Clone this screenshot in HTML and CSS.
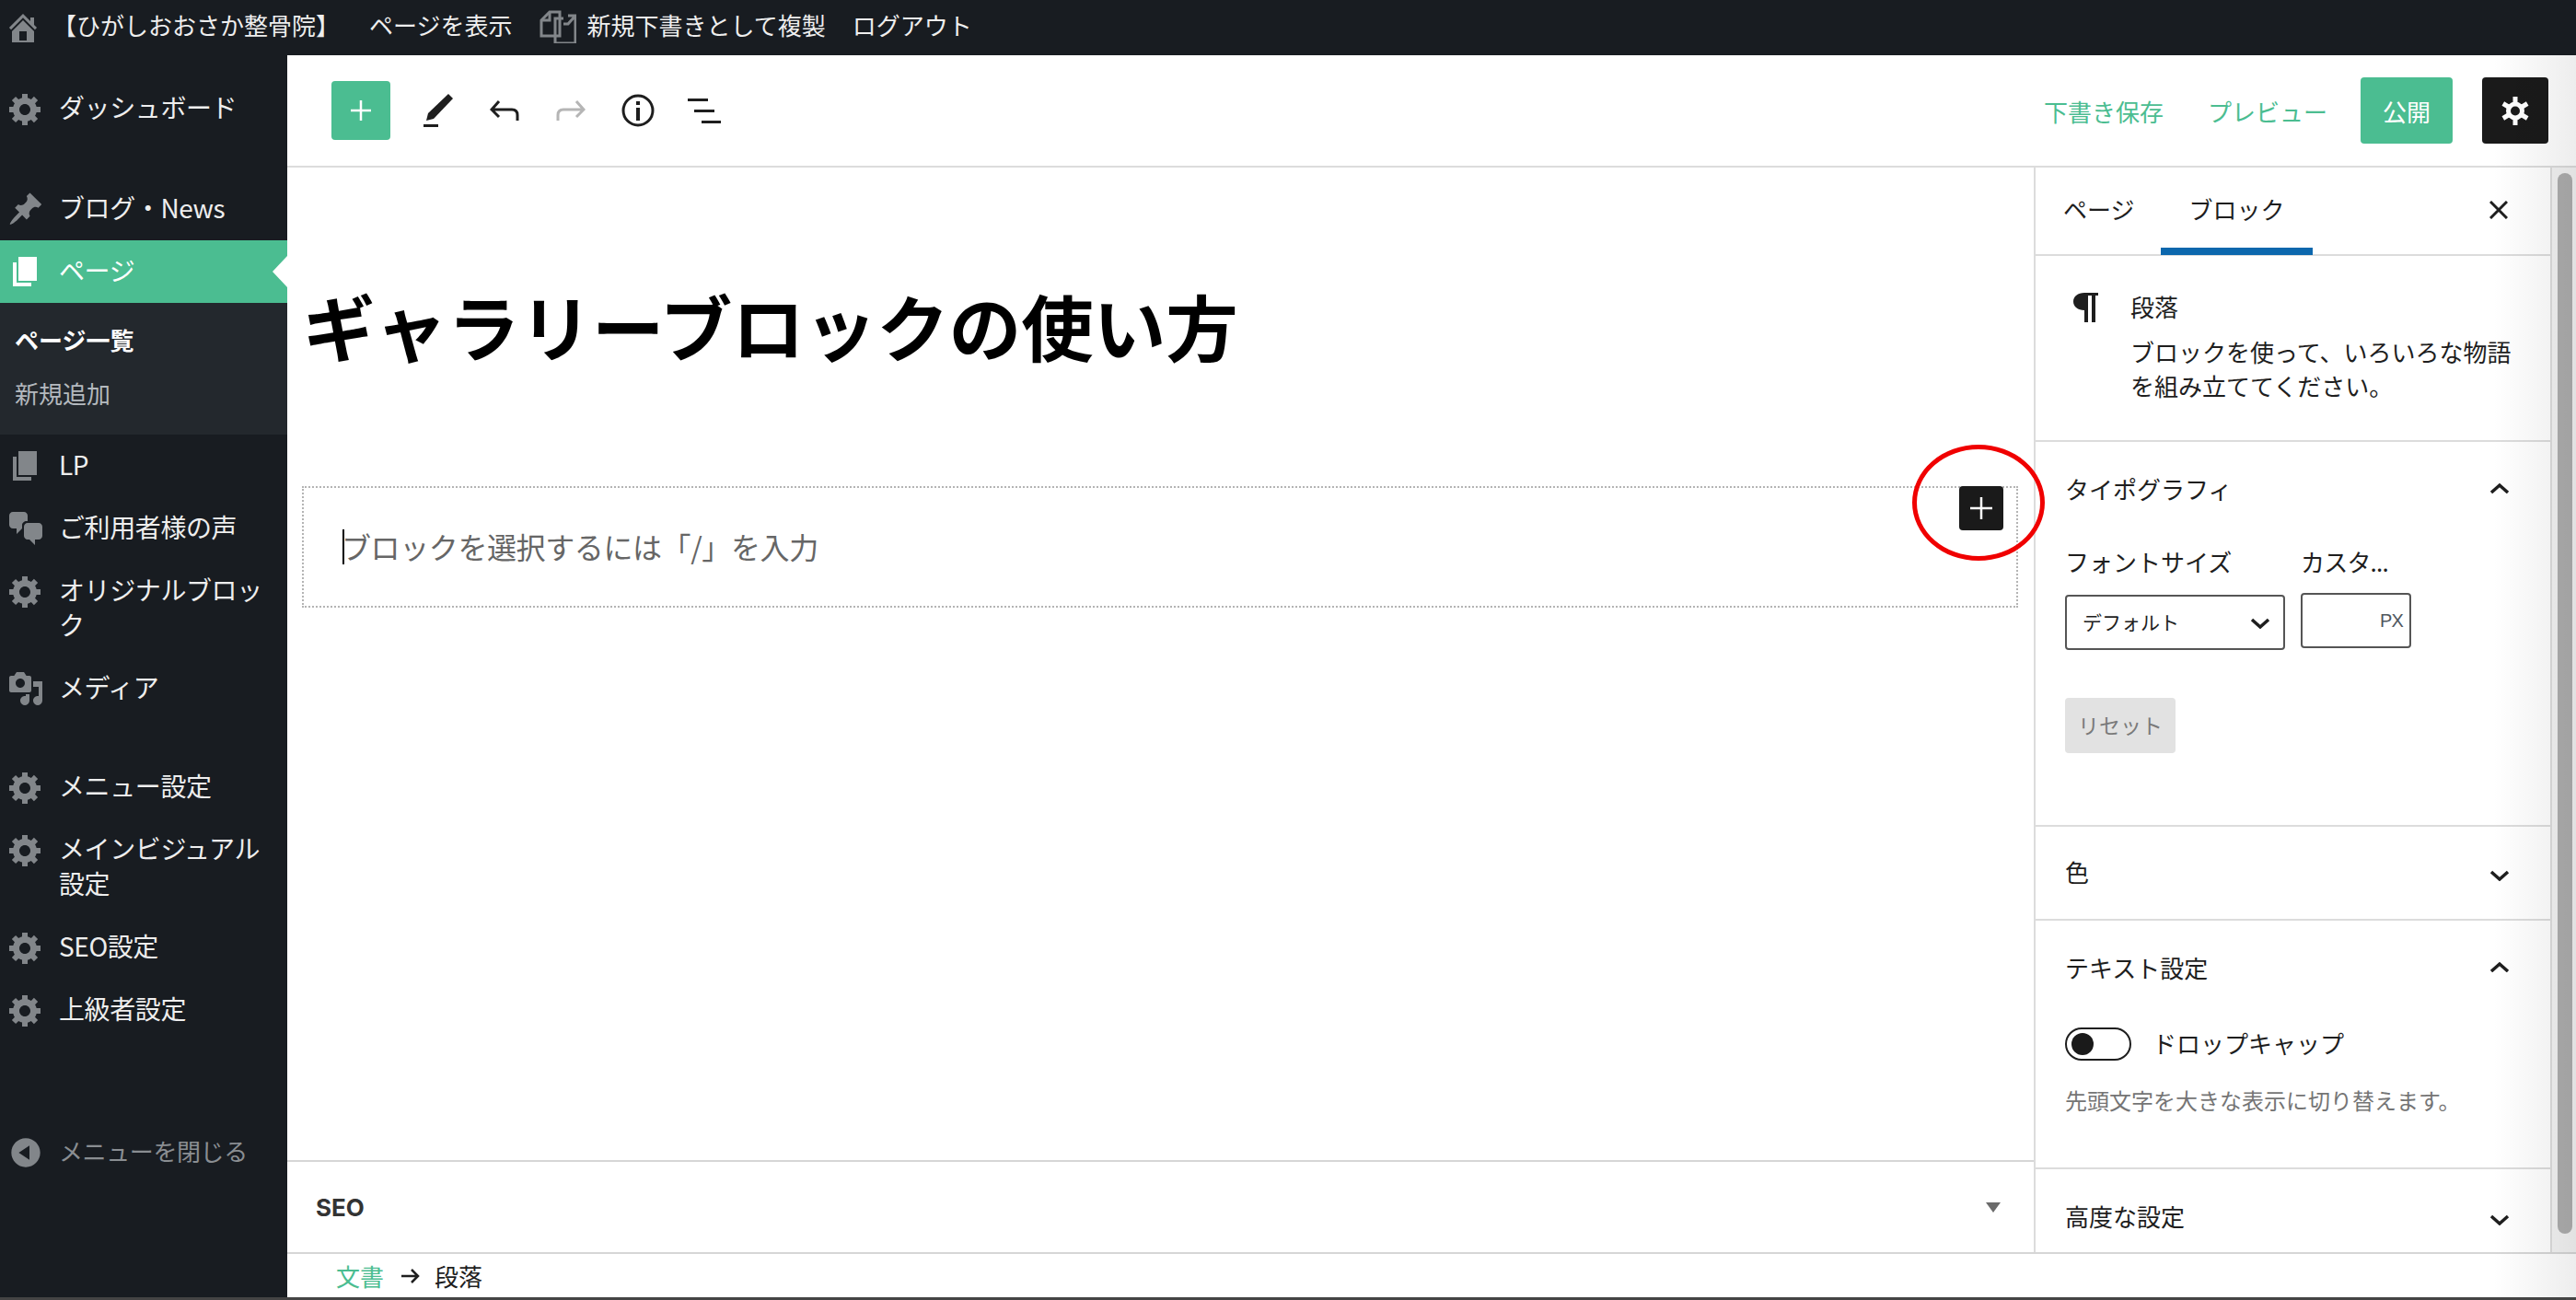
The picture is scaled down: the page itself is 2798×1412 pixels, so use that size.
FILE: index.html
```html
<!DOCTYPE html>
<html lang="ja">
<head>
  <meta charset="UTF-8" />
  <title>ギャラリーブロックの使い方</title>
  <link rel="stylesheet" href="styles.css">
</head>
<body>
  <!-- Shared icons -->
  <svg class="icon-defs">
    <symbol id="icon-gear" viewBox="0 0 20 20"><path d="M18 12h-2.18c-.17.7-.44 1.35-.81 1.93l1.54 1.54-2.1 2.1-1.54-1.54c-.58.36-1.23.63-1.91.79V19H8v-2.19c-.68-.16-1.33-.43-1.91-.79l-1.54 1.54-2.12-2.12 1.54-1.54c-.36-.58-.63-1.23-.79-1.91H1V9.03h2.17c.16-.7.44-1.35.8-1.94L2.43 5.55l2.1-2.1 1.54 1.54c.58-.37 1.24-.64 1.93-.81V2h3v2.18c.68.16 1.33.43 1.91.79l1.54-1.54 2.12 2.12-1.54 1.54c.36.59.64 1.24.8 1.94H18V12zm-8.5 1.5c1.66 0 3-1.34 3-3s-1.34-3-3-3-3 1.34-3 3 1.34 3 3 3z"/></symbol>
    <symbol id="icon-page" viewBox="0 0 20 20"><path d="M6 15V2h10v13H6zm-1 1h8v2H3V5h2v11z"/></symbol>
    <symbol id="icon-down" viewBox="0 0 22 12"><path d="M2 2l9 8 9-8"/></symbol>
    <symbol id="icon-up" viewBox="0 0 22 12"><path d="M2 11l9-8 9 8"/></symbol>
  </svg>

  <!-- Admin bar -->
  <header class="adminbar">
    <svg class="adminbar-home" viewBox="0 0 20 20"><path d="M16 8.5l1.53 1.53-1.06 1.06L10 4.62l-6.47 6.47-1.06-1.06L10 2.5l4 4v-2h2v4zm-6-2.46l6 5.99V18H4v-5.97zM12 17v-5H8v5h4z"/></svg>
    <a class="adminbar-site">【ひがしおおさか整骨院】</a>
    <a class="adminbar-view">ページを表示</a>
    <svg class="adminbar-copy" viewBox="0 0 40 40" fill="none"><path d="M2 15 11 6h11v26H2z"/><path d="M11 6v9H2"/><path d="M17 40V13h9M31 10h8v30H17M39 10l-8 9h-5"/></svg>
    <a class="adminbar-duplicate">新規下書きとして複製</a>
    <a class="adminbar-logout">ログアウト</a>
  </header>

  <div class="layout">
    <!-- Side menu -->
    <nav class="sidemenu">
      <a class="menu-item"><svg><use href="#icon-gear"/></svg><span>ダッシュボード</span></a>
      <a class="menu-item group-start"><svg viewBox="0 0 20 20"><path d="M10.44 3.02l1.82-1.82 6.36 6.35-1.83 1.82c-1.05-.68-2.48-.57-3.41.36l-.75.75c-.92.93-1.04 2.35-.35 3.41l-1.83 1.82-2.41-2.41-2.8 2.79c-.42.42-3.38 2.71-3.8 2.29s1.86-3.39 2.28-3.81l2.79-2.79L4.1 9.36l1.83-1.82c1.05.69 2.48.57 3.41-.36l.75-.75c.93-.92 1.05-2.35.35-3.41z"/></svg><span>ブログ・News</span></a>
      <a class="menu-item active"><svg><use href="#icon-page"/></svg><span>ページ</span></a>
      <div class="submenu">
        <a class="submenu-current">ページ一覧</a>
        <a>新規追加</a>
      </div>
      <a class="menu-item"><svg><use href="#icon-page"/></svg><span>LP</span></a>
      <a class="menu-item"><svg viewBox="0 0 20 20"><path d="M11 6h-.82C9.07 6 8 7.2 8 8.16V10l-3 3v-3H3c-1.1 0-2-.9-2-2V3c0-1.1.9-2 2-2h6c1.1 0 2 .9 2 2v3zm0 1h6c1.1 0 2 .9 2 2v5c0 1.1-.9 2-2 2h-2v3l-3-3h-1c-1.1 0-2-.9-2-2V9c0-1.1.9-2 2-2z"/></svg><span>ご利用者様の声</span></a>
      <a class="menu-item"><svg><use href="#icon-gear"/></svg><span>オリジナルブロック</span></a>
      <a class="menu-item"><svg viewBox="0 0 20 20"><path d="M13 11V4c0-.55-.45-1-1-1h-1.67L9 1H5L3.67 3H2c-.55 0-1 .45-1 1v7c0 .55.45 1 1 1h10c.55 0 1-.45 1-1zM7 4.5c1.38 0 2.5 1.12 2.5 2.5S8.38 9.5 7 9.5 4.5 8.38 4.5 7 5.62 4.5 7 4.5zM14 6h5v10.5c0 1.38-1.12 2.5-2.5 2.5S14 17.88 14 16.5s1.12-2.5 2.5-2.5c.17 0 .34.02.5.05V9h-3V6zm-4 8.05V13h2v3.5c0 1.38-1.12 2.5-2.5 2.5S7 17.88 7 16.5 8.12 14 9.5 14c.17 0 .34.02.5.05z"/></svg><span>メディア</span></a>
      <a class="menu-item group-settings"><svg><use href="#icon-gear"/></svg><span>メニュー設定</span></a>
      <a class="menu-item"><svg><use href="#icon-gear"/></svg><span>メインビジュアル設定</span></a>
      <a class="menu-item"><svg><use href="#icon-gear"/></svg><span>SEO設定</span></a>
      <a class="menu-item"><svg><use href="#icon-gear"/></svg><span>上級者設定</span></a>
      <a class="menu-item menu-collapse"><svg viewBox="0 0 20 20"><path d="M10 2.16c4.33 0 7.84 3.51 7.84 7.84s-3.51 7.84-7.84 7.84S2.16 14.33 2.16 10 5.71 2.16 10 2.16zm2 11.72V6.12L6.18 9.97z"/></svg><span>メニューを閉じる</span></a>
    </nav>

    <div class="content">
      <!-- Editor toolbar -->
      <div class="toolbar">
        <button class="inserter"><svg viewBox="0 0 24 24"><path d="M12 1v22M1 12h22"/></svg></button>
        <svg class="tool tool-pencil" viewBox="0 0 32 37"><path class="solid" d="M27 0l5 5L11 27l-8 2 2-8z"/><path class="solid" d="M0 33h16v3H0z"/></svg>
        <svg class="tool tool-undo" viewBox="0 0 32 22"><path d="M10 1 2 10l8 8M2 10h22q6 0 6 6v6"/></svg>
        <svg class="tool tool-redo" viewBox="0 0 32 22"><path d="M22 1l8 9-8 8M30 10H8q-6 0-6 6v6"/></svg>
        <svg class="tool tool-info" viewBox="0 0 36 36"><circle cx="18" cy="18" r="16"/><path class="solid" d="M16 8h4v4h-4zM16 15h4v14h-4z"/></svg>
        <svg class="tool tool-list" viewBox="0 0 36 27"><path class="solid" d="M0 0h22v3H0zM7 12h22v3H7zM15 24h21v3H15z"/></svg>
        <div class="toolbar-right">
          <a class="link-green link-save">下書き保存</a>
          <a class="link-green link-preview">プレビュー</a>
          <button class="publish">公開</button>
          <button class="settings">
            <svg viewBox="0 0 30 33"><circle cx="15" cy="16.500" r="7.500"/><path d="M15 1v31M1.800 8.500l26.400 16M1.800 24.500l26.400-16"/><circle class="cog-hole" cx="15" cy="16.500" r="5"/></svg>
          </button>
        </div>
      </div>

      <div class="workspace">
        <main class="editor">
          <div class="canvas">
            <h1 class="post-title">ギャラリーブロックの使い方</h1>
            <div class="block">
              <span class="caret"></span><span class="placeholder">ブロックを選択するには「/」を入力</span>
              <button class="block-add"><svg viewBox="0 0 24 24"><path d="M12 0v24M0 12h24"/></svg></button>
              <span class="red-circle"></span>
            </div>
          </div>
          <div class="metabox">
            <strong>SEO</strong>
            <span class="metabox-arrow"></span>
          </div>
        </main>

        <!-- Settings sidebar -->
        <aside class="panel">
          <div class="tabs">
            <span class="tab">ページ</span>
            <span class="tab tab-active">ブロック</span>
            <svg class="tabs-close" viewBox="0 0 20 20"><path d="M1 1l18 18M19 1 1 19"/></svg>
          </div>
          <div class="block-card">
            <span class="pilcrow"><svg viewBox="0 0 27 32"><path d="M12 0h15v3h-3v29h-4V3h-4v29h-4V19C5 19 0 15 0 9.500S5 0 12 0z"/></svg></span>
            <div>
              <div class="block-name">段落</div>
              <p class="block-desc">ブロックを使って、いろいろな物語を組み立ててください。</p>
            </div>
          </div>

          <section class="section section-typo">
            <div class="section-head"><span>タイポグラフィ</span><svg class="chevron chevron-up"><use href="#icon-up"/></svg></div>
            <div class="typo-fields">
              <div class="field-size">
                <label>フォントサイズ</label>
                <div class="select">デフォルト<svg class="chevron chevron-down"><use href="#icon-down"/></svg></div>
              </div>
              <div class="field-custom">
                <label>カスタ...</label>
                <div class="unit-input">PX</div>
              </div>
            </div>
            <button class="reset">リセット</button>
          </section>

          <section class="section">
            <div class="section-head section-head-small"><span>色</span><svg class="chevron chevron-down"><use href="#icon-down"/></svg></div>
          </section>

          <section class="section section-text">
            <div class="section-head"><span>テキスト設定</span><svg class="chevron chevron-up"><use href="#icon-up"/></svg></div>
            <div class="toggle-row"><span class="toggle"><i></i></span><span class="toggle-label">ドロップキャップ</span></div>
            <p class="help">先頭文字を大きな表示に切り替えます。</p>
          </section>

          <section class="section section-last">
            <div class="section-head"><span>高度な設定</span><svg class="chevron chevron-down"><use href="#icon-down"/></svg></div>
          </section>
        </aside>

        <div class="scrolltrack"><div class="scrollthumb"></div></div>
      </div>

      <div class="breadcrumb">
        <a class="link-green">文書</a>
        <svg viewBox="0 0 20 16"><path d="M0 8h18M11 1l7 7-7 7"/></svg>
        <span>段落</span>
      </div>
    </div>
  </div>
  <div class="bottom-line"></div>
  <div class="edge-fade"></div>
</body>
</html>
```

FILE: styles.css
```css
* {
  box-sizing: border-box;
}

html, body {
  margin: 0;
  height: 1412px;
  overflow: hidden;
}

body {
  position: relative;
  display: flex;
  flex-direction: column;
  font-family: "Noto Sans CJK JP", "Noto Sans", sans-serif;
  font-size: 26px;
  color: #1e1e1e;
  background: #fff;
}

button {
  border: none;
  padding: 0;
  font: inherit;
}

p {
  margin: 0;
}

.icon-defs {
  display: none;
}

/* Admin bar */
.adminbar {
  flex: none;
  display: flex;
  align-items: center;
  height: 60px;
  padding: 0 0 6px 5px;
  background: #181c21;
  color: #eeeeee;
  line-height: 1;
}

.adminbar-home {
  width: 40px;
  height: 40px;
  margin-top: 6px;
  fill: #82868a;
}

.adminbar-site {
  margin-left: 12px;
}

.adminbar-view {
  margin-left: 32px;
}

.adminbar-copy {
  width: 40px;
  height: 40px;
  margin-left: 29px;
  stroke: #82868a;
  stroke-width: 3;
}

.adminbar-duplicate {
  margin-left: 12px;
}

.adminbar-logout {
  margin-left: 29px;
}

.layout {
  flex: 1;
  display: flex;
  min-height: 0;
}

/* Side menu */
.sidemenu {
  flex: none;
  width: 312px;
  padding-top: 24px;
  background: #181c21;
  color: #eeeeee;
  font-size: 28px;
  line-height: 38px;
}

.menu-item {
  display: flex;
  align-items: flex-start;
  padding: 13px 10px 17px 64px;
  position: relative;
  letter-spacing: -0.4px;
}

.menu-item svg {
  position: absolute;
  left: 8px;
  top: 14px;
  width: 40px;
  height: 40px;
  fill: #82868a;
}

.group-start {
  margin-top: 41px;
}

.group-settings {
  margin-top: 39px;
}

.active {
  background: #4bbd91;
  color: #fff;
}

.active svg {
  fill: #fff;
}

.active::after {
  content: "";
  position: absolute;
  right: 0;
  top: 17px;
  border: 17px solid transparent;
  border-left: none;
  border-right: 16px solid #fff;
}

.submenu {
  display: flex;
  flex-direction: column;
  height: 143px;
  padding: 21px 0 0 16px;
  background: #23282d;
  color: #b4b9be;
  font-size: 26px;
  line-height: 38px;
  gap: 20px;
}

.submenu-current {
  font-weight: 700;
  color: #fff;
}

.menu-collapse {
  margin-top: 87px;
  color: #8a8e92;
  font-size: 26px;
}

/* Right part */
.content {
  flex: 1;
  display: flex;
  flex-direction: column;
  min-width: 0;
}

.toolbar {
  flex: none;
  display: flex;
  align-items: center;
  height: 122px;
  padding-left: 48px;
  border-bottom: 2px solid #dcdcdc;
}

.inserter {
  display: flex;
  align-items: center;
  justify-content: center;
  width: 64px;
  height: 64px;
  border-radius: 4px;
  background: #4bbd91;
}

.inserter svg {
  width: 24px;
  height: 24px;
  fill: none;
  stroke: #fff;
  stroke-width: 2.500;
}

.tool {
  flex: none;
  fill: none;
  stroke: #1e1e1e;
  stroke-width: 3;
}

.tool .solid {
  fill: #1e1e1e;
  stroke: none;
}

.tool-pencil {
  width: 32px;
  height: 37px;
  margin-left: 36px;
}

.tool-undo {
  width: 32px;
  height: 22px;
  margin-left: 40px;
}

.tool-redo {
  width: 32px;
  height: 22px;
  margin-left: 40px;
  stroke: #b5b5b5;
}

.tool-info {
  width: 36px;
  height: 36px;
  margin-left: 39px;
}

.tool-list {
  width: 36px;
  height: 27px;
  margin-left: 36px;
}

.toolbar-right {
  display: flex;
  align-items: center;
  margin-left: auto;
  padding-right: 30px;
}

.link-green {
  color: #4bbd91;
}

.link-preview {
  margin-left: 48px;
}

.publish {
  width: 100px;
  height: 72px;
  margin-left: 36px;
  border-radius: 4px;
  background: #4bbd91;
  color: #fff;
}

.settings {
  display: flex;
  align-items: center;
  justify-content: center;
  width: 72px;
  height: 72px;
  margin-left: 32px;
  border-radius: 4px;
  background: #1a1a1a;
}

.settings svg {
  width: 30px;
  height: 33px;
  fill: #fff;
  stroke: #fff;
  stroke-width: 5;
}

.settings .cog-hole {
  fill: #1a1a1a;
  stroke: none;
}

.workspace {
  flex: none;
  display: flex;
  height: 1178px;
}

/* Editor */
.editor {
  flex: 1;
  display: flex;
  flex-direction: column;
  min-width: 0;
}

.canvas {
  flex: 1;
  padding-top: 121px;
}

.post-title {
  margin: 0 0 0 17px;
  font-size: 78.500px;
  line-height: 100px;
  font-weight: 700;
  color: #000;
  white-space: nowrap;
}

.block {
  position: relative;
  display: flex;
  align-items: center;
  height: 132px;
  margin: 125px 17px 0 16px;
  padding-left: 42px;
  border: 2px dotted #b4b4b4;
  font-size: 32px;
  color: #666;
}

.caret {
  width: 2px;
  height: 38px;
  background: #000;
}

.placeholder {
  margin: -3px 0 0 -3px;
  letter-spacing: -0.4px;
}

.block-add {
  position: absolute;
  right: 14px;
  top: -2px;
  display: flex;
  align-items: center;
  justify-content: center;
  width: 48px;
  height: 48px;
  border-radius: 4px;
  background: #1a1a1a;
}

.block-add svg {
  width: 24px;
  height: 24px;
  stroke: #fff;
  stroke-width: 2.500;
}

.red-circle {
  position: absolute;
  left: 1747px;
  top: -47px;
  width: 144px;
  height: 126px;
  border: 5px solid #f00000;
  border-radius: 50%;
}

.metabox {
  flex: none;
  display: flex;
  align-items: center;
  justify-content: space-between;
  height: 100px;
  padding: 0 36px 0 31px;
  border-top: 2px solid #d6d6d6;
  color: #333;
  font-family: "Inter", "Noto Sans CJK JP", sans-serif;
}

.metabox strong {
  font-weight: 700;
}

.metabox-arrow {
  width: 0;
  height: 0;
  border: 8px solid transparent;
  border-top: 11px solid #6b6b6b;
  border-bottom: none;
}

/* Settings sidebar */
.panel {
  flex: none;
  display: flex;
  flex-direction: column;
  width: 563px;
  border-left: 2px solid #dcdcdc;
  border-right: 2px solid #dcdcdc;
}

.tabs {
  flex: none;
  display: flex;
  align-items: flex-start;
  height: 96px;
  padding: 0 0 0 30px;
  border-bottom: 2px solid #dcdcdc;
  position: relative;
}

.tab {
  position: relative;
  height: 94px;
  line-height: 90px;
  margin-right: 59px;
}

.tab-active::after {
  content: "";
  position: absolute;
  left: -30px;
  right: -30px;
  bottom: -1px;
  height: 8px;
  background: #0c67ad;
}

.tabs-close {
  position: absolute;
  right: 46px;
  top: 36px;
  width: 20px;
  height: 20px;
  fill: none;
  stroke: #1e1e1e;
  stroke-width: 3;
}

.block-card {
  flex: none;
  display: flex;
  height: 202px;
  padding: 37px 0 0 41px;
  border-bottom: 2px solid #dcdcdc;
}

.pilcrow {
  width: 62px;
  flex: none;
  padding-top: 3px;
}

.pilcrow svg {
  width: 27px;
  height: 32px;
  fill: #1e1e1e;
}

.block-name {
  line-height: 36px;
}

.block-desc {
  margin-top: 12px;
  width: 420px;
  line-height: 37px;
}

.section {
  flex: none;
  border-bottom: 2px solid #dcdcdc;
}

.section-typo {
  height: 418px;
}

.section-text {
  height: 270px;
}

.section-last {
  flex: 1;
  border-bottom: none;
}

.section-head {
  display: flex;
  align-items: center;
  justify-content: space-between;
  height: 104px;
  padding: 0 44px 0 32px;
}

.section-head span {
  margin-top: -4px;
}

.section-head-small {
  height: 100px;
}

.chevron {
  flex: none;
  width: 22px;
  height: 12px;
  fill: none;
  stroke: #1e1e1e;
  stroke-width: 3.500;
}

.chevron-up {
  margin-top: -4px;
}

.chevron-down {
  margin-top: 5px;
}

.typo-fields {
  display: flex;
  gap: 17px;
  padding: 8px 0 0 32px;
}

.typo-fields label {
  display: block;
  line-height: 36px;
}

.field-size {
  width: 239px;
}

.field-custom {
  width: 120px;
  letter-spacing: -0.8px;
}

.select {
  display: flex;
  align-items: center;
  justify-content: space-between;
  height: 60px;
  margin-top: 18px;
  padding: 0 14px 3px 17px;
  border: 2px solid #555;
  border-radius: 4px;
  font-size: 21px;
}

.unit-input {
  display: flex;
  align-items: center;
  justify-content: flex-end;
  height: 60px;
  margin-top: 16px;
  padding-right: 7px;
  border: 2px solid #555;
  border-radius: 4px;
  font-size: 20px;
  color: #50575e;
  font-family: "Liberation Sans", sans-serif;
}

.reset {
  display: block;
  width: 120px;
  height: 60px;
  margin: 52px 0 0 32px;
  padding-bottom: 3px;
  border-radius: 4px;
  background: #e2e2e2;
  color: #7a7a7a;
  font-size: 23px;
}

.toggle-row {
  display: flex;
  align-items: center;
  gap: 23px;
  padding: 12px 0 0 32px;
  line-height: 36px;
}

.toggle-label {
  margin-top: -3px;
}

.toggle {
  display: flex;
  align-items: center;
  width: 72px;
  height: 36px;
  padding-left: 5px;
  border: 2px solid #1e1e1e;
  border-radius: 18px;
}

.toggle i {
  width: 24px;
  height: 24px;
  border-radius: 50%;
  background: #1a1a1a;
}

.help {
  margin: 25px 0 0 32px;
  font-size: 24px;
  line-height: 36px;
  color: #757575;
}

/* Scroll bar */
.scrolltrack {
  flex: none;
  width: 26px;
  padding: 6px 4px 0 6px;
  background: #f3f3f3;
}

.scrollthumb {
  height: 1152px;
  border-radius: 8px;
  background: #aeaeae;
}

/* Breadcrumb */
.breadcrumb {
  flex: 1;
  display: flex;
  align-items: center;
  gap: 19px;
  padding-left: 53px;
  border-top: 2px solid #d6d6d6;
  line-height: 1;
}

.breadcrumb svg {
  width: 20px;
  height: 16px;
  margin-right: -3px;
  fill: none;
  stroke: #1e1e1e;
  stroke-width: 2.500;
}

.bottom-line {
  flex: none;
  height: 3px;
  background: #444;
}

/* soft fade on the right edge of the shot */
.edge-fade {
  position: absolute;
  top: 60px;
  right: 0;
  bottom: 3px;
  width: 90px;
  background: linear-gradient(to right, rgba(0, 0, 0, 0), rgba(0, 0, 0, 0.07));
  pointer-events: none;
}
```
